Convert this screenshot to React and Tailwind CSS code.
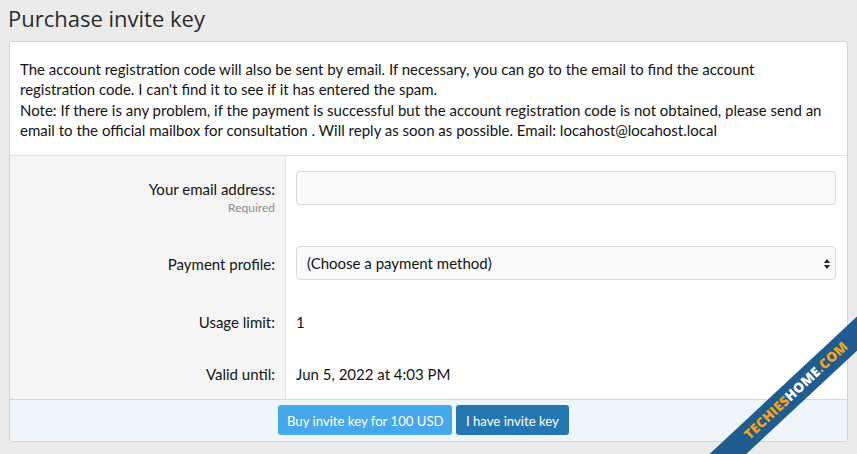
import React from 'react';

const Row = ({ label, hint, children, plain }) => (
    <div className="grid grid-cols-[276px_1fr]">
        <div className={`bg-[#f5f5f5] border-r border-[#e2e2e2] pr-[10px] text-right ${plain ? 'pt-[17px] pb-[15px]' : 'pt-[23px] pb-[14px]'}`}>
            <div className="leading-[20px] text-[#141414]">{label}</div>
            {hint && <div className="text-[12px] leading-[18px] text-[#8c8c8c]">{hint}</div>}
        </div>
        <div className={`pl-[10px] pr-[11px] ${plain ? 'pt-[17px] pb-[15px] leading-[20px]' : 'py-[15px]'}`}>
            {children}
        </div>
    </div>
);

const Watermark = () => (
    <div className="absolute left-[651px] top-[378px] w-[290px] h-[25px] bg-[#1f5c8f] -rotate-[43deg] flex items-center justify-center font-['Open_Sans',sans-serif] font-extrabold text-[13.5px] tracking-[0.2px]">
        <span className="text-[#f7a21b]">TECHIES</span>
        <span className="text-white">HOME</span>
        <span className="text-[#f7a21b]">.COM</span>
    </div>
);

const Btn = ({ w, bg, children }) => (
    <button className={`h-[30px] ${w} ${bg} rounded-[3px] text-white text-[14px] flex items-center justify-center whitespace-nowrap`}>
        <span className="inline-block scale-x-[0.94]">{children}</span>
    </button>
);

export default function App() {
    return (
        <div className="relative w-[857px] h-[454px] overflow-hidden bg-[#ebebeb] font-['Lato',sans-serif] text-[15px] text-[#141414]">
            <h1 className="px-[8px] pt-[5px] text-[22px] leading-[26px] text-[#2b2b2b] font-['Open_Sans',sans-serif]">Purchase invite key</h1>

            <div className="ml-[9px] mr-[9px] mt-[10px] border border-[#d3d3d3] rounded-[3px] bg-white overflow-hidden">
                <div className="pl-[10px] pr-[18px] pt-[17px] pb-[15px] leading-[20.3px] border-b border-[#e2e2e2]">
                    The account registration code will also be sent by email. If necessary, you can go to the email to find the account registration code. I can't find it to see if it has entered the spam.
                    <br />
                    Note: If there is any problem, if the payment is successful but the account registration code is not obtained, please send an email to the official mailbox for consultation . Will reply as soon as possible. Email: locahost@locahost.local
                </div>

                <Row label="Your email address:" hint="Required">
                    <input type="email" className="block w-full h-[34px] rounded-[4px] border border-[#d8d8d8] bg-[#f8fafc] px-[10px] outline-none" />
                </Row>

                <Row label="Payment profile:">
                    <div className="relative h-[34px] rounded-[4px] border border-[#d8d8d8] bg-[#f8fafc] flex items-center px-[10px]">
                        <span>(Choose a payment method)</span>
                        <svg className="absolute right-[4px] top-[11px]" width="8" height="12" viewBox="0 0 8 12">
                            <path d="M4 1 L7 5 H1 Z" fill="#222" />
                            <path d="M4 11 L7 7 H1 Z" fill="#222" />
                        </svg>
                    </div>
                </Row>

                <Row label="Usage limit:" plain>1</Row>
                <Row label="Valid until:" plain>Jun 5, 2022 at 4:03 PM</Row>

                <div className="border-t border-[#d3d8dd] bg-[#eef5fb] flex justify-center gap-[4px] pr-[10px] pt-[5px] pb-[6px]">
                    <Btn w="w-[174px]" bg="bg-[#47a7eb]">Buy invite key for 100 USD</Btn>
                    <Btn w="w-[113px]" bg="bg-[#2577b1]">I have invite key</Btn>
                </div>
            </div>

            <Watermark />
        </div>
    );
}
